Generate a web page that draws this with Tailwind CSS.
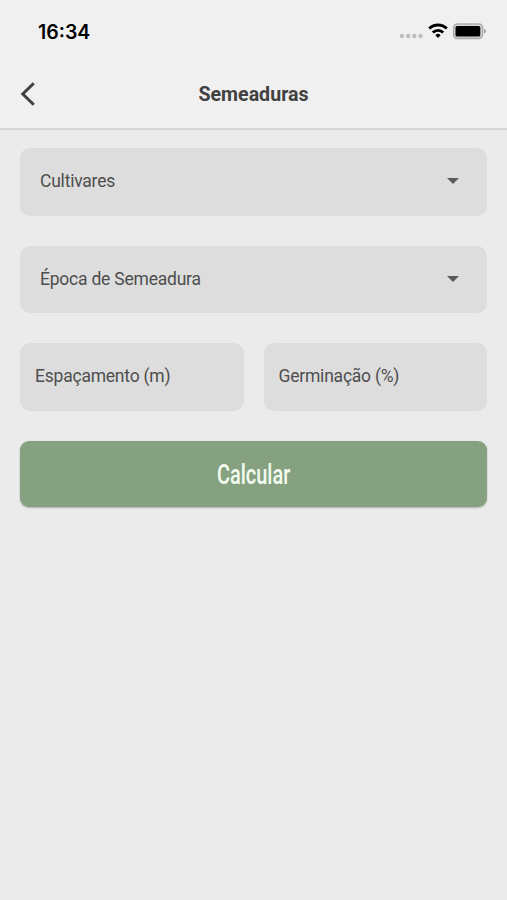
<!DOCTYPE html>
<html lang="pt-BR">
<head>
  <meta charset="UTF-8" />
  <meta name="viewport" content="width=device-width, initial-scale=1.0"/>
  <title>Semeaduras</title>
  <script src="https://cdn.jsdelivr.net/npm/@tailwindcss/browser@4"></script>
</head>
<body class="bg-[#ebebeb] text-[#4e4e4e] font-['Roboto',sans-serif] min-h-screen overflow-hidden">

  <!-- Header -->
  <header class="h-[129.6px] bg-[#f0f0f0] border-b-2 border-[#d6d6d6]">
    <div class="h-[62px] flex items-center justify-between pl-[38px] pr-5">
      <span class="font-['Inter',sans-serif] text-[19.5px] font-semibold text-black leading-none pt-[3px]">16:34</span>
      <svg class="w-[88px] h-[20px]" viewBox="0 0 88 20">
        <g fill="#bdbdbd">
          <circle cx="3" cy="15" r="2.2"/>
          <circle cx="9.2" cy="15" r="2.2"/>
          <circle cx="15.3" cy="15" r="2.2"/>
          <circle cx="21.5" cy="15" r="2.2"/>
        </g>
        <g fill="none" stroke="#000" stroke-width="2.8">
          <path d="M30.2 7.6a12.6 12.6 0 0 1 17.6 0"/>
          <path d="M33.8 11.5a7.4 7.4 0 0 1 10.4 0"/>
        </g>
        <path d="M36.4 14.2a3.6 3.6 0 0 1 5.2 0L39 16.9z" fill="#000"/>
        <rect x="54.7" y="3" width="28.8" height="14.4" rx="3.6" fill="#d8d8d8" stroke="#adadad" stroke-width="1.6"/>
        <rect x="56.5" y="5" width="24.8" height="10.5" rx="1.5" fill="#000"/>
        <path d="M85 7.8q1.8.7 1.8 2.4t-1.8 2.4z" fill="#9b9b9b"/>
      </svg>
    </div>
    <div class="h-[64px] grid grid-cols-[1fr_auto_1fr] items-center px-5">
      <svg class="w-4 h-6" viewBox="0 0 16 24" fill="none" stroke="#414141" stroke-width="3">
        <path d="M13.8 1.2 2.8 12l11 10.8"/>
      </svg>
      <h1 class="text-[19.6px] font-bold text-[#414141] leading-none pt-[2px]">Semeaduras</h1>
    </div>
  </header>

  <!-- Form -->
  <main class="px-[20px] pt-[18.3px]">
    <div class="space-y-[30px]">
      <div class="h-[67.7px] flex items-center justify-between bg-[#dddddd] rounded-[10px] pl-5 pr-7 pb-[2px]">
        <span class="text-[17.5px] tracking-[-0.22px] leading-none pt-[2px]">Cultivares</span>
        <svg class="w-3 h-[6px]" viewBox="0 0 12 6"><path d="M0 0h12L6 6z" fill="#5a5a5a"/></svg>
      </div>
      <div class="h-[67.7px] flex items-center justify-between bg-[#dddddd] rounded-[10px] pl-5 pr-7 pb-px">
        <span class="text-[17.5px] tracking-[-0.22px] leading-none pt-[2px]">Época de Semeadura</span>
        <svg class="w-3 h-[6px]" viewBox="0 0 12 6"><path d="M0 0h12L6 6z" fill="#5a5a5a"/></svg>
      </div>
      <div class="grid grid-cols-2 gap-5">
        <div class="h-[67.7px] flex items-center bg-[#dddddd] rounded-[10px] pl-[15px] pb-px">
          <span class="text-[17.5px] tracking-[-0.22px] leading-none pt-px">Espaçamento (m)</span>
        </div>
        <div class="h-[67.7px] flex items-center bg-[#dddddd] rounded-[10px] pl-[15px] pb-px">
          <span class="text-[17.5px] tracking-[-0.22px] leading-none pt-px">Germinação (%)</span>
        </div>
      </div>
      <button class="w-full h-[66px] flex items-center justify-center bg-[#85a180] rounded-[9px] shadow-[0_1px_2px_rgba(0,0,0,0.25)] text-[#f3fbf0]">
        <span class="text-[27px] font-medium leading-none scale-x-[0.74] pt-[4px]">Calcular</span>
      </button>
    </div>
  </main>

</body>
</html>
